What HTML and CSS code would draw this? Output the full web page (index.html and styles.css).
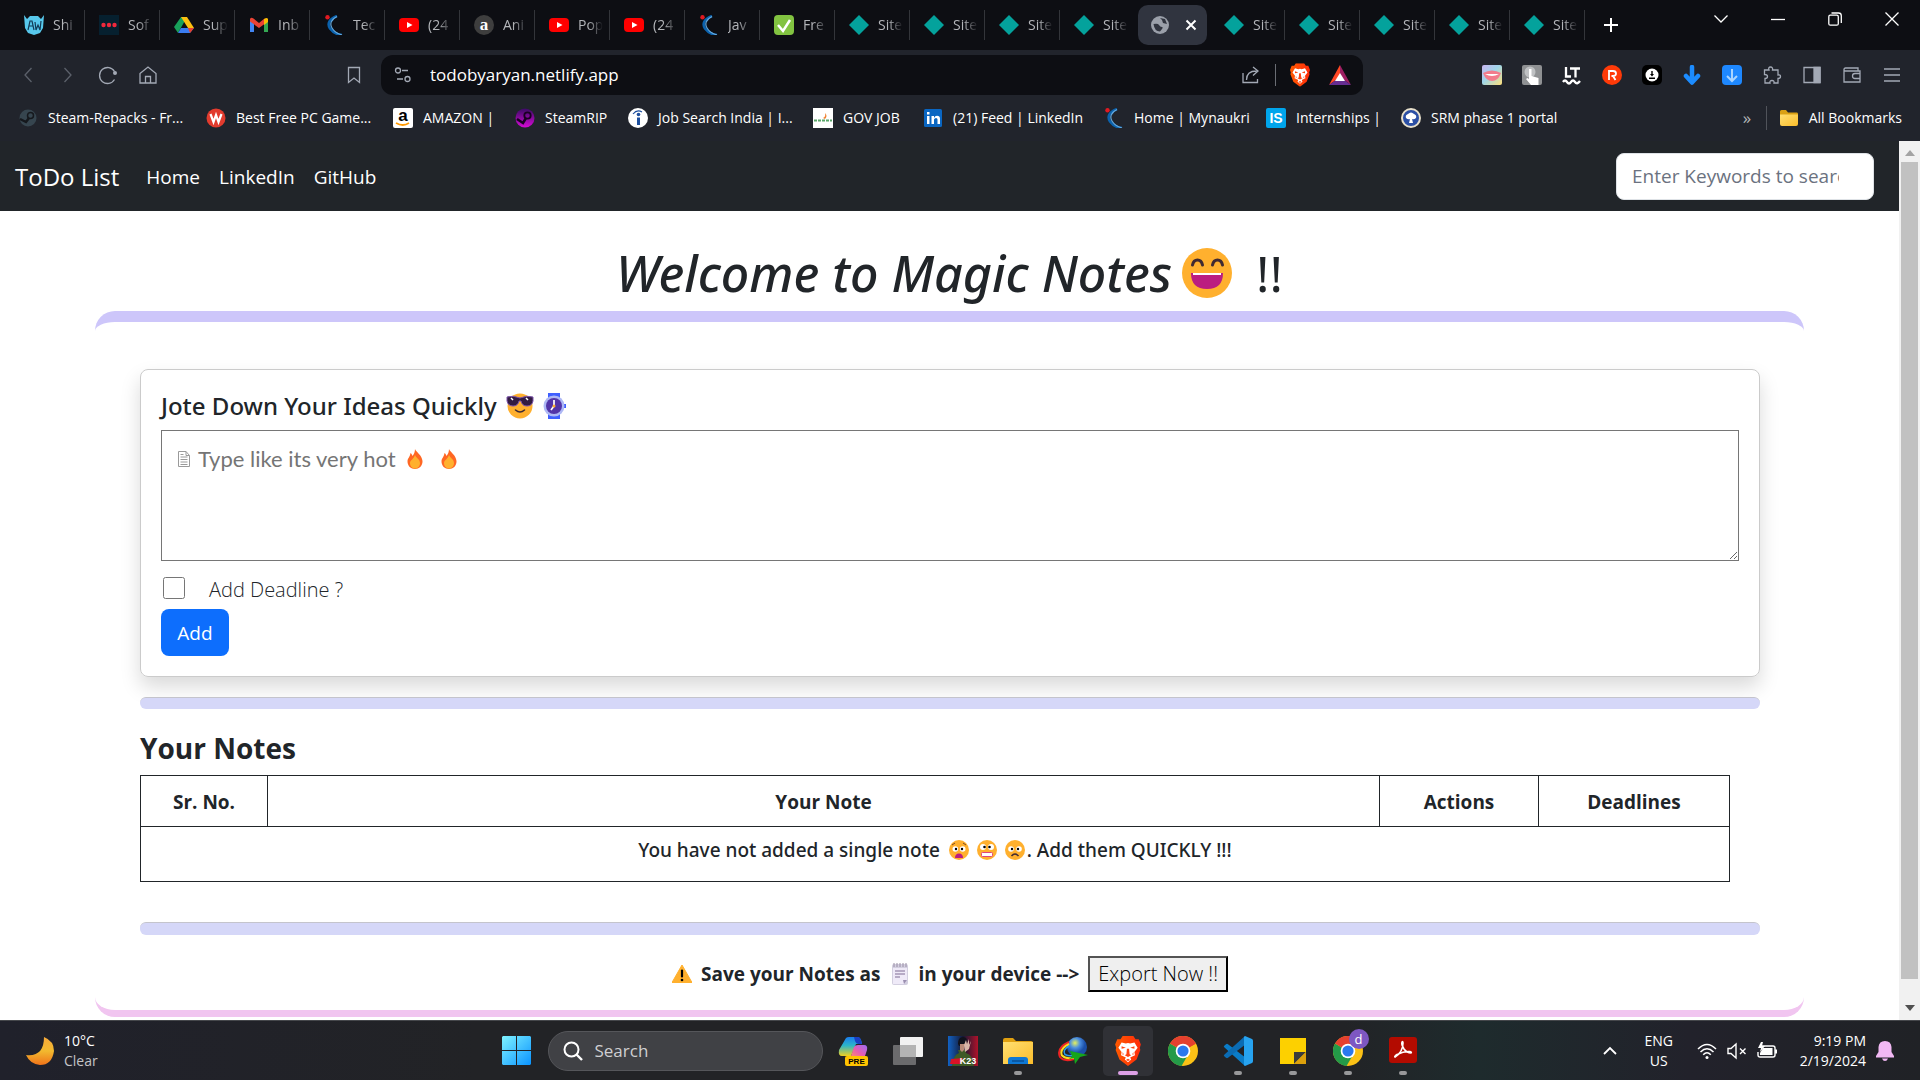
FILE: index.html
```html
<!DOCTYPE html>
<html lang="en">
<head>
<meta charset="utf-8">
<title>ToDo List</title>
<link rel="stylesheet" href="styles.css">
</head>
<body>
<svg class="sprite" aria-hidden="true">
  <defs>
    <linearGradient id="g-win" x1="0" y1="0" x2="1" y2="1"><stop offset="0" stop-color="#7ff3ff"/><stop offset="1" stop-color="#0a93ff"/></linearGradient>
    <linearGradient id="g-moon" x1="0" y1="0" x2="0" y2="1"><stop offset="0" stop-color="#f6a93a"/><stop offset=".5" stop-color="#f2b92f"/><stop offset="1" stop-color="#f0731a"/></linearGradient>
    <linearGradient id="g-brave" x1="0" y1="0" x2="1" y2="0"><stop offset="0" stop-color="#ff5a00"/><stop offset="1" stop-color="#ff2a0a"/></linearGradient>
    <linearGradient id="g-folder" x1="0" y1="0" x2="1" y2="1"><stop offset="0" stop-color="#ffdf72"/><stop offset="1" stop-color="#fbbd2b"/></linearGradient>
    <linearGradient id="g-cop" x1="0" y1="0" x2="0" y2="1"><stop offset="0" stop-color="#1a7df0"/><stop offset=".45" stop-color="#2cb5c8"/><stop offset="1" stop-color="#f0d020"/></linearGradient>
    <linearGradient id="g-cop2" x1="1" y1="0" x2="0" y2="1"><stop offset="0" stop-color="#9a6cf5"/><stop offset=".5" stop-color="#e85cb0"/><stop offset="1" stop-color="#ff9a5a"/></linearGradient>
    <linearGradient id="g-game" x1="0" y1="0" x2="1" y2="0"><stop offset="0" stop-color="#1262c4"/><stop offset=".5" stop-color="#151834"/><stop offset="1" stop-color="#b0122a"/></linearGradient>
    <linearGradient id="g-smile" x1="0" y1="0" x2="1" y2="1"><stop offset="0" stop-color="#c9b4f0"/><stop offset=".45" stop-color="#9fd6ea"/><stop offset="1" stop-color="#ffe07a"/></linearGradient>
    <linearGradient id="g-steam" x1="0" y1="0" x2="0" y2="1"><stop offset="0" stop-color="#3b0a66"/><stop offset="1" stop-color="#d40ad4"/></linearGradient>
    <radialGradient id="g-globe" cx=".4" cy=".3"><stop offset="0" stop-color="#e6f25c"/><stop offset=".5" stop-color="#4c8fe0"/><stop offset="1" stop-color="#1b4fa8"/></radialGradient>
    <symbol id="i-diamond" viewBox="0 0 20 20"><path d="M10 0l10 10-10 10L0 10z" fill="#04a29c"/></symbol>
    <symbol id="i-yt" viewBox="0 0 20 20"><rect y="3" width="20" height="14" rx="4" fill="#f00"/><path d="M8 7l5.500 3L8 13z" fill="#fff"/></symbol>
    <symbol id="i-naukri" viewBox="0 0 20 20"><circle cx="3.500" cy="2.200" r="2.200" fill="#e01a22"/><path d="M13 1C5 4 3 9 6 13.500c3 4 6 6 12 6.500" fill="none" stroke="#0b62ad" stroke-width="2.600"/><path d="M13 1.500C7 4.500 5.500 9 8 13c2 3.500 5 5.500 10 7" fill="none" stroke="#63a8de" stroke-width="1.200"/></symbol>
    <symbol id="i-brave" viewBox="0 0 24 28"><path d="M7 0h10l2 3 3 0 2 5-1 3 .5 2-3.500 9-8 6-8-6L.5 13 1 11 0 8l2-5h3z" fill="url(#g-brave)"/><path d="M6 6l4 1 2-.5L14 7l4-1 3 5-3 4 .5 3-4.500 2 1 2-3 2.500L9 22l1-2-4.500-2L6 15l-3-4z" fill="#fff"/><path d="M6 9.500l4 1.500-4 1zM18 9.500l-4 1.500 4 1zM11 12h2l.5 5 1.500 1-3 1.500L9 18l1.500-1zM7 15l1 2-1 1zM17 15l-1 2 1 1zM10 22.300l2-1 2 1-2 1z" fill="#ff4310"/></symbol>
    <symbol id="i-chrome" viewBox="0 0 30 30"><circle cx="15" cy="15" r="15" fill="#fbc116"/><path d="M15 15L2 7.500A15 15 0 0 0 13.500 30l7-12z" fill="#249a48"/><path d="M15 15L2 7.500A15 15 0 0 1 28 7.500z" fill="#e5402f"/><path d="M28 7.500H15v7z" fill="#e5402f"/><circle cx="15" cy="15" r="7.300" fill="#fff"/><circle cx="15" cy="15" r="5.600" fill="#2b78ee"/></symbol>
    <symbol id="i-folder" viewBox="0 0 20 20"><path d="M1 3.500Q1 2 2.500 2H7l2 2.500h9Q19 4.500 19 6v3H1z" fill="#d9a014"/><path d="M1 6.500h18V16q0 2-2 2H3q-2 0-2-2z" fill="url(#g-folder)"/></symbol>
    <symbol id="e-face" viewBox="0 0 20 20"><circle cx="10" cy="10" r="10" fill="#ffb02e"/></symbol>
    <symbol id="e-fire" viewBox="0 0 16 20"><path d="M8 0c1 3 7 6 7.500 12 .2 5-3.500 8-7.500 8S.3 17 .5 12C.7 9 3 8 3.500 4c1 .7 1.500 1.500 2 3C7 5 8 3 8 0z" fill="#ff6723"/><path d="M8 6c1 3 5 4 5 8 0 3-2 5.500-5 5.500S3 17 3 14c0-3 4-4 5-8z" fill="#ffb02e"/></symbol>
  </defs>
</svg>

<header class="chrome">
  <div class="tabstrip">
    <nav class="tabs" aria-label="Open tabs">
      <a class="tab" href="#"><svg class="ic" viewBox="0 0 20 20"><path d="M0 0l3 4 3-3h8l3 3 3-4-1 13-3 5-6 2-6-2-3-5z" fill="#57c8ec"/><path d="M4 15l2-9h2l2 9M5.500 11h3M11 7l1 8 2-5 2 5 1-9" fill="none" stroke="#123a55" stroke-width="1.200"/></svg><span>Shi</span></a>
      <a class="tab" href="#"><svg class="ic" viewBox="0 0 20 20"><path d="M0 0h20v20H0z" fill="#06202f"/><g fill="#f0283c"><circle cx="4.500" cy="10" r="2.200"/><circle cx="10" cy="10" r="2.200"/><circle cx="15.500" cy="10" r="2.200"/></g></svg><span>Sof</span></a>
      <a class="tab" href="#"><svg class="ic" viewBox="0 0 20 20"><path d="M7 2h6l-9 16L0 12z" fill="#18a05a"/><path d="M7 2h6l7 11h-6z" fill="#fcc010"/><path d="M4 18l3-5h13l-4 5z" fill="#3a7cf0"/><path d="M14 13h6l-4 5z" fill="#e8402f"/></svg><span>Sup</span></a>
      <a class="tab" href="#"><svg class="ic" viewBox="0 0 20 20"><path d="M1 5v12h4V8z" fill="#4285f4"/><path d="M19 5v12h-4V8z" fill="#34a853"/><path d="M1 4q1-2 3.500-.5L10 8l5.500-4.500V9L10 13 1 6.500z" fill="#ea4335"/><path d="M15 4q3-2 4 0v3l-4 3z" fill="#fbbc04"/></svg><span>Inb</span></a>
      <a class="tab" href="#"><svg class="ic"><use href="#i-naukri"/></svg><span>Tec</span></a>
      <a class="tab" href="#"><svg class="ic"><use href="#i-yt"/></svg><span>(24</span></a>
      <a class="tab" href="#"><svg class="ic" viewBox="0 0 20 20"><circle cx="10" cy="10" r="10" fill="#3e3e3e"/><text class="serif" x="10" y="15" text-anchor="middle" font-size="17" font-weight="700" fill="#fff">a</text></svg><span>Ani</span></a>
      <a class="tab" href="#"><svg class="ic"><use href="#i-yt"/></svg><span>Pop</span></a>
      <a class="tab" href="#"><svg class="ic"><use href="#i-yt"/></svg><span>(24</span></a>
      <a class="tab" href="#"><svg class="ic"><use href="#i-naukri"/></svg><span>Jav</span></a>
      <a class="tab" href="#"><svg class="ic" viewBox="0 0 20 20"><rect width="20" height="20" rx="4" fill="#82c341"/><path d="M4 10l5 6 7-11" fill="none" stroke="#fff" stroke-width="2.500"/></svg><span>Fre</span></a>
      <a class="tab" href="#"><svg class="ic"><use href="#i-diamond"/></svg><span>Site</span></a>
      <a class="tab" href="#"><svg class="ic"><use href="#i-diamond"/></svg><span>Site</span></a>
      <a class="tab" href="#"><svg class="ic"><use href="#i-diamond"/></svg><span>Site</span></a>
      <a class="tab plain" href="#"><svg class="ic"><use href="#i-diamond"/></svg><span>Site</span></a>
      <div class="tab current"><svg class="ic" viewBox="0 0 20 20"><circle cx="10" cy="10" r="9" fill="#9ba0aa"/><path d="M3.500 9q4.500-1 5.500 1t3 2-2 4.500q-5.500 0-6.500-7.500zM10 3l5 1 2 5-4-1-1-3z" fill="#30343f"/></svg><button class="close" aria-label="Close tab"><svg viewBox="0 0 12 12" width="12" height="12"><path d="M1.500 1.500l9 9m0-9l-9 9" stroke="#fff" stroke-width="2"/></svg></button></div>
      <a class="tab" href="#"><svg class="ic"><use href="#i-diamond"/></svg><span>Site</span></a>
      <a class="tab" href="#"><svg class="ic"><use href="#i-diamond"/></svg><span>Site</span></a>
      <a class="tab" href="#"><svg class="ic"><use href="#i-diamond"/></svg><span>Site</span></a>
      <a class="tab" href="#"><svg class="ic"><use href="#i-diamond"/></svg><span>Site</span></a>
      <a class="tab" href="#"><svg class="ic"><use href="#i-diamond"/></svg><span>Site</span></a>
    </nav>
    <button class="newtab" aria-label="New tab"><svg class="line" viewBox="0 0 14 14" width="14" height="14"><path d="M7 0v14M0 7h14" stroke-width="2"/></svg></button>
    <div class="winctl">
      <button aria-label="Search tabs"><svg class="line" viewBox="0 0 14 14" width="14" height="14"><path d="M.5 3.500L7 10l6.500-6.500"/></svg></button>
      <button aria-label="Minimize"><svg class="line" viewBox="0 0 14 14" width="14" height="14"><path d="M0 7.500h14"/></svg></button>
      <button aria-label="Restore"><svg class="line" viewBox="0 0 14 14" width="14" height="14"><rect x=".8" y="3.200" width="9.500" height="10" rx="1.500"/><path d="M3.500 1h7q2.800 0 2.800 2.800V11"/></svg></button>
      <button aria-label="Close"><svg class="line" viewBox="0 0 14 14" width="14" height="14"><path d="M.5.5l13 13m0-13l-13 13"/></svg></button>
    </div>
  </div>

  <div class="toolbar">
    <div class="navbtns">
      <button aria-label="Back"><svg class="line dim" viewBox="0 0 20 20"><path d="M13.500 3L7 10l6.500 7"/></svg></button>
      <button aria-label="Forward"><svg class="line dim" viewBox="0 0 20 20"><path d="M6.500 3l6.500 7-6.500 7"/></svg></button>
      <button aria-label="Reload"><svg class="line soft" viewBox="0 0 20 20"><path d="M16.500 14.500A8 8 0 1 1 16.500 6.500"/><circle cx="17" cy="8" r="2" fill="#a3a9b5" stroke="none"/></svg></button>
      <button aria-label="Home"><svg class="line soft" viewBox="0 0 20 20"><path d="M2 8.500L10 2l8 6.500V18H2zM7.500 18v-6.500h5V18"/></svg></button>
    </div>
    <button class="mark" aria-label="Bookmark"><svg class="line soft" viewBox="0 0 20 20"><path d="M4.500 2.500h11v15L10 13l-5.500 4.500z"/></svg></button>
    <div class="omni">
      <svg class="ic line" viewBox="0 0 20 20"><circle cx="5" cy="5.500" r="2.500"/><path d="M9 5.500h6M4 14h6"/><circle cx="14.500" cy="14" r="2.500"/></svg>
      <input class="url" type="text" aria-label="Address" value="todobyaryan.netlify.app">
      <button aria-label="Share"><svg class="line soft" viewBox="0 0 20 20"><path d="M2 8v9.500h14.500V14M5.500 15q0-9 10-9M12 2l5 4-5 4.500"/></svg></button>
      <i class="vbar"></i>
      <button aria-label="Shields"><svg viewBox="0 0 24 28"><use href="#i-brave"/></svg></button>
      <button class="bat" aria-label="Rewards"><svg viewBox="0 0 22 20"><path d="M11 0L0 20l11-8z" fill="#ff4724"/><path d="M11 0l11 20-11-8z" fill="#9e1f63"/><path d="M0 20l11-8 11 8z" fill="#662d91"/><path d="M11 8l5 8H6z" fill="#fff"/></svg></button>
    </div>
    <div class="exts">
      <button aria-label="Smile"><svg viewBox="0 0 20 20"><rect width="20" height="20" rx="2" fill="url(#g-smile)"/><path d="M1 8q9-5 18 0-3 8-9 8T1 8z" fill="#f27c8c"/><path d="M3 9h14q-7 4-14 0z" fill="#fff"/></svg></button>
      <button aria-label="Touch"><svg viewBox="0 0 20 20"><rect width="20" height="20" rx="2" fill="#8f9193"/><circle cx="8" cy="7" r="5.500" fill="#bfc1c3"/><path d="M7 4h2.500v7l7 2V20H9l-5-6 1.500-1L7 14z" fill="#fff"/></svg></button>
      <button aria-label="LanguageTool"><svg class="line" viewBox="0 0 20 20"><path d="M4 2v9.500h5M8 3.500h10M13.500 3.500v9M1 17q2-3 4 0t4 0 4 0 5-1" stroke-width="2.300"/></svg></button>
      <button aria-label="Recorder"><svg class="line" viewBox="0 0 20 20"><circle cx="10" cy="10" r="10" fill="#ff3a08" stroke="none"/><path d="M7 15V6h4q3 0 3 2.500T11 11H9.500M11 11l2.500 4" stroke-width="1.800"/></svg></button>
      <button aria-label="Downloader"><svg viewBox="0 0 20 20"><rect width="20" height="20" rx="5" fill="#000"/><circle cx="10" cy="10" r="6.500" fill="#fff"/><path d="M9.300 6h1.400v3H12l-2 2.500L8 9h1.300zM7 12.500h6V14H7z"/></svg></button>
      <button aria-label="Download"><svg viewBox="0 0 20 20"><path d="M10 2v14M4 11l6 6.500 6-6.500" fill="none" stroke="#1c8cff" stroke-width="4.500" stroke-linecap="round" stroke-linejoin="round"/></svg></button>
      <button aria-label="Download manager"><svg viewBox="0 0 20 20"><rect width="20" height="20" rx="4" fill="#1e88ff"/><path d="M10 4v12M5 11l5 5 5-5" fill="none" stroke="#a9d4ff" stroke-width="2"/></svg></button>
      <button aria-label="Extensions"><svg class="line soft" viewBox="0 0 20 20"><path d="M2.500 5H7q-1-3 1.500-3T10.500 5H16v5q2.500-.5 2.500 1.500T16 13.500V18h-4q.5-2.500-2-2.500T8 18H3v-4.500q2.500 0 2.500-2T2.500 9.500z"/></svg></button>
      <button aria-label="Sidebar"><svg class="line soft" viewBox="0 0 20 20"><path d="M2 2.500h16v15H2z"/><path d="M12 2.500h6v15h-6z" fill="#a3a9b5"/></svg></button>
      <button aria-label="Wallet"><svg class="line soft" viewBox="0 0 20 20"><path d="M18 8V6H3.500Q2 6 2 4.500T3.500 3H16v3M2 4.500V17h16v-3M18 8.500h-5q-2.500 0-2.500 2.500t2.500 2.500h5z"/></svg></button>
      <button aria-label="Menu"><svg class="line soft" viewBox="0 0 20 20"><path d="M2 4h16M2 10h16M2 16h16"/></svg></button>
    </div>
  </div>

  <nav class="bookmarks" aria-label="Bookmarks">
    <a href="#"><svg class="ic" viewBox="0 0 20 20"><circle cx="10" cy="10" r="8.500" fill="#36454f"/><circle cx="12.500" cy="7.500" r="3" fill="none" stroke="#15181d" stroke-width="1.500"/><path d="M2 11l6 3 3-4" stroke="#15181d" stroke-width="2.500" fill="none"/></svg>Steam-Repacks - Fr...</a>
    <a href="#"><svg class="ic" viewBox="0 0 20 20"><circle cx="10" cy="10" r="9.500" fill="#e23b2e"/><path d="M4.500 6l3 8L10 7l2.500 7 3-8" fill="none" stroke="#fff" stroke-width="2.200"/></svg>Best Free PC Game...</a>
    <a href="#"><svg class="ic" viewBox="0 0 20 20"><rect width="20" height="20" rx="2" fill="#fff"/><text class="sans" x="10" y="13" text-anchor="middle" font-size="17" font-weight="700">a</text><path d="M3 15q7 4 13 0" fill="none" stroke="#f90" stroke-width="1.800"/></svg>AMAZON |</a>
    <a href="#"><svg class="ic" viewBox="0 0 20 20"><circle cx="10" cy="10" r="9.500" fill="url(#g-steam)"/><circle cx="12.500" cy="7.500" r="3.200" fill="none" stroke="#190022" stroke-width="1.800"/><path d="M2 11l6 4 3-5" stroke="#190022" stroke-width="2.500" fill="none"/></svg>SteamRIP</a>
    <a href="#"><svg class="ic" viewBox="0 0 20 20"><circle cx="10" cy="10" r="10" fill="#fff"/><path d="M5 6q4-5 9-2" fill="none" stroke="#1d4f9e" stroke-width="1.200"/><circle cx="10.500" cy="6.500" r="1.800" fill="#1d4f9e"/><path d="M9 9.500h3V17H9z" fill="#1d4f9e"/></svg>Job Search India | I...</a>
    <a href="#"><svg class="ic" viewBox="0 0 20 20"><path d="M0 0h20v20H0z" fill="#fff"/><path d="M1 12.500h18" stroke="#5aa76a" stroke-width="2" stroke-dasharray="3 1"/><path d="M12 5q3 3 0 6l-2-1q3-1 2-5z" fill="#f08030"/></svg>GOV JOB</a>
    <a href="#"><svg class="ic" viewBox="0 0 20 20"><rect x="1" y="1" width="18" height="18" rx="1.500" fill="#0a66c2"/><path d="M4 8h2.500v8H4zM4 4h2.500v2.500H4zM8.500 8H11v8H8.500zM11 10q1-2.300 3-2.300 3 0 3 3.300v5h-2.500v-4.500q0-1.500-1.500-1.500t-2 1.500z" fill="#fff"/></svg>(21) Feed | LinkedIn</a>
    <a href="#"><svg class="ic"><use href="#i-naukri"/></svg>Home | Mynaukri</a>
    <a href="#"><svg class="ic" viewBox="0 0 20 20"><rect width="20" height="20" rx="2" fill="#00a5ec"/><text class="sans" x="10" y="15" text-anchor="middle" font-size="14" font-weight="700" fill="#fff">IS</text></svg>Internships |</a>
    <a href="#"><svg class="ic" viewBox="0 0 20 20"><circle cx="10" cy="10" r="9" fill="#2b4fa5" stroke="#e8e0cc" stroke-width="2"/><path d="M5 10q-1-3 2-4 3-3 6 0 3 1 2 4-2 2-4 1l1 4H8l1-4q-2 1-4-1z" fill="#fff"/></svg>SRM phase 1 portal</a>
    <span class="more">»</span>
    <a class="allmarks" href="#"><svg class="ic"><use href="#i-folder"/></svg>All Bookmarks</a>
  </nav>
</header>

<div class="viewport">
  <div class="page">
    <nav class="navbar">
      <a class="brand" href="#">ToDo List</a>
      <a href="#">Home</a>
      <a href="#">LinkedIn</a>
      <a href="#">GitHub</a>
      <input class="search" type="text" aria-label="Search notes" placeholder="Enter Keywords to search">
    </nav>

    <h1><em>Welcome to Magic Notes</em><svg class="grin" viewBox="0 0 50 50"><circle cx="25" cy="25" r="25" fill="#ffb02e"/><path d="M10.500 17q1-5 5-5t5 5M30.500 17q1-5 5-5t5 5" fill="none" stroke="#402a32" stroke-width="3" stroke-linecap="round"/><path d="M9 25h32q0 16-16 16T9 25z" fill="#bb1d80"/><path d="M11 25h28v2H11z" fill="#fff"/></svg><span>!!</span></h1>

    <main class="frame">
      <section class="card">
        <h2><label for="note">Jote Down Your Ideas Quickly</label>
          <svg class="emo28" viewBox="0 0 28 26"><circle cx="14" cy="13" r="12.500" fill="#ffb02e"/><path d="M1 4q6-2 13 1 7-3 13-1v4q-1 5-6 5-5 0-6-5h-2q-1 5-6 5-5 0-6-5z" fill="#321b41" stroke="#7b52ab" stroke-width="1"/><path d="M5 5l2 2M20 5l2 2" stroke="#fff" stroke-width="1.500"/><path d="M9.500 17q4.500 4 9 0" fill="none" stroke="#402a32" stroke-width="1.600" stroke-linecap="round"/></svg>
          <svg class="emo24" viewBox="0 0 24 26"><path d="M5 0h12v26H5z" fill="#3f5fff"/><path d="M20 11h3v4h-3z" fill="#3f5fff"/><circle cx="11" cy="13" r="10.500" fill="#aeb8f5"/><circle cx="11" cy="13" r="8" fill="#5235a8"/><path d="M11 7v6l-3 4" fill="none" stroke="#fff" stroke-width="1.700"/><circle cx="11" cy="13" r="1.500" fill="#ffb02e"/></svg>
        </h2>
        <div class="notebox">
          <textarea id="note" placeholder="Type like its very hot"></textarea>
          <svg class="sheet" viewBox="0 0 12 16"><path d="M.5.5H8l3.500 4v11H.5zM8 .5v4h3.500M2.500 6h7M2.500 8.500h7M2.500 11h7M2.500 13.500h7M2.500 3.500h3" fill="none" stroke="#9a9a9a"/></svg>
          <div class="fires"><svg><use href="#e-fire"/></svg><svg><use href="#e-fire"/></svg></div>
        </div>
        <div class="deadline"><input type="checkbox" id="dl"><label for="dl">Add Deadline ?</label></div>
        <button class="add">Add</button>
      </section>
      <hr>
      <h3>Your Notes</h3>
      <table>
        <thead><tr><th class="c1">Sr. No.</th><th>Your Note</th><th class="c3">Actions</th><th class="c4">Deadlines</th></tr></thead>
        <tbody><tr><td colspan="4">You have not added a single note
          <span class="faces"><svg class="face" viewBox="0 0 20 20"><use href="#e-face"/><circle cx="6.300" cy="9" r="2.800" fill="#fff"/><circle cx="13.700" cy="9" r="2.800" fill="#fff"/><circle cx="7" cy="9" r="1.200"/><circle cx="13" cy="9" r="1.200"/><path d="M3 5l3-2M17 5l-3-2" stroke="#804a20"/><path d="M6 18q0-4.500 4-4.500t4 4.500z" fill="#bb1d80"/></svg><svg class="face" viewBox="0 0 20 20"><use href="#e-face"/><circle cx="6" cy="7" r="3" fill="#fff"/><circle cx="14" cy="7" r="3" fill="#fff"/><circle cx="7.500" cy="7" r="1.300"/><circle cx="12.500" cy="7" r="1.300"/><rect x="4.500" y="12.500" width="11" height="4" rx="1" fill="#fff" stroke="#e0457b"/></svg><svg class="face" viewBox="0 0 20 20"><use href="#e-face"/><circle cx="6" cy="9" r="2.800" fill="#fff"/><circle cx="14" cy="9" r="2.800" fill="#fff"/><circle cx="7" cy="9" r="1.200"/><circle cx="13" cy="9" r="1.200"/><path d="M6.500 16q3.500-4 7 0" fill="none" stroke="#402a32" stroke-width="1.500"/></svg></span>. Add them QUICKLY !!!</td></tr></tbody>
      </table>
      <hr class="second">
      <div class="export">
        <svg class="ic" viewBox="0 0 20 20"><path d="M10 1l10 17.500H0z" fill="#ffb02e" stroke="#ffb02e" stroke-linejoin="round"/><path d="M10 6.500v6" stroke="#000" stroke-width="2.200" stroke-linecap="round"/><circle cx="10" cy="16" r="1.300"/></svg>
        <strong>Save your Notes as</strong>
        <svg class="pad" viewBox="0 0 16 22"><rect y="1" width="16" height="21" rx="2" fill="#d3cfe0"/><path d="M1 5h14v12l-3 4H1z" fill="#efeaf8"/><path d="M2 0v4M5 0v4M8 0v4M11 0v4M14 0v4" stroke="#998ea4" stroke-width="1"/><path d="M3 8h10M3 11h10M3 14h5" stroke="#a596b5" stroke-width="1.300"/><path d="M11 17h4l-3 4z" fill="#9b8fb0"/></svg>
        <strong>in your device --&gt;</strong>
        <button>Export Now !!</button>
      </div>
    </main>
  </div>
  <div class="scroll" aria-hidden="true">
    <svg viewBox="0 0 10 6"><path d="M5 0l5 6H0z" fill="#a3a3a3"/></svg>
    <div class="thumb"></div>
    <svg viewBox="0 0 10 6"><path d="M5 6l5-6H0z" fill="#505050"/></svg>
  </div>
</div>

<footer class="taskbar">
  <div class="weather"><svg viewBox="0 0 28 28"><path d="M18 0q10 4 10 14Q26 28 14 28 4 27 0 18q18 2 18-18z" fill="url(#g-moon)"/></svg><div><b>10°C</b><span>Clear</span></div></div>
  <div class="dock">
    <button class="start" aria-label="Start"><svg viewBox="0 0 29 29"><path d="M1 0h13v14H0V1zM15 0h13l1 1v13H15zM0 15h14v14H1l-1-1zM15 15h14v13l-1 1H15z" fill="url(#g-win)"/></svg></button>
    <label class="find"><svg class="line" viewBox="0 0 20 20"><circle cx="8.500" cy="8.500" r="7" stroke-width="2"/><path d="M13.500 13.500l5.500 5.500" stroke-width="2.400"/></svg><input type="text" placeholder="Search" aria-label="Search"></label>
    <div class="apps">
      <button aria-label="Copilot"><svg viewBox="0 0 30 30"><path d="M8 2q1-1 3-1h8q3 0 4 3l1 4h-6L13 20H4q-4 0-3-6z" fill="url(#g-cop)"/><path d="M16 1h4q2 0 3 3l1 4h-4q-2 0-3-3z" fill="#1a3fc4"/><path d="M20 9h6q4 0 3 5l-3 9H12l4-12q1-2 4-2z" fill="url(#g-cop2)"/><rect x="7" y="20" width="23" height="10" rx="2" fill="#ffc400"/><text class="sans" x="18.500" y="28" font-size="8" font-weight="700" text-anchor="middle">PRE</text></svg></button>
      <button aria-label="Task view"><svg viewBox="0 0 30 30"><rect y="9" width="23" height="20" rx="1" fill="#6b6b6d"/><rect x="7" y="1" width="23" height="20" rx="1" fill="#f2f2f2"/><path d="M7 9h16v12H7z" fill="#b4b4b4"/></svg></button>
      <button aria-label="Game"><svg viewBox="0 0 30 30"><path d="M0 0h30v30H0z" fill="url(#g-game)"/><path d="M4 30q1-11 7-13l-1-3h7l1 3q7 2 8 13z" fill="#3e5a26"/><path d="M10 8q0-7 5-7t4 7l-1 2h-7z" fill="#10121c"/><path d="M12 8h5l-1 6-2 2-2-2z" fill="#b98a78"/><path d="M16 9l2-5 1 4 2-5 0 6 2-4-2 8-4 3z" fill="#d9b5a8"/><path d="M3 23l12-1-3 6H2z" fill="#d91226"/><text class="sans" x="20" y="28" font-size="9" font-weight="700" fill="#fff" text-anchor="middle">K23</text></svg></button>
      <button class="run" aria-label="File Explorer"><svg viewBox="0 0 30 30"><path d="M0 4q0-2 2-2h8l3 3h15q2 0 2 2v4H0z" fill="#e0a010"/><path d="M0 6h30v22H0z" fill="url(#g-folder)"/><path d="M5 28v-4q0-3 3-3h14q3 0 3 3v4z" fill="#0f78d4"/><path d="M9 25h12" stroke="#0a4f96" stroke-width="1.500"/></svg></button>
      <button aria-label="Download manager"><svg viewBox="0 0 30 30"><circle cx="19" cy="11" r="10" fill="url(#g-globe)"/><path d="M11 6Q-2 12 2 21q4 5 14 2" fill="none" stroke="#e22" stroke-width="2"/><path d="M11 8Q1 13 4 19.500q4 4 12 2" fill="none" stroke="#ffd91f" stroke-width="2"/><path d="M11 10q-7 4-4 8.500 4 2 9 1" fill="none" stroke="#2c9be8" stroke-width="1.500"/><path d="M12 15l18 4-8 2-5 7-1-6-5 1 3-3z" fill="#16a51c"/></svg></button>
      <button class="run active" aria-label="Brave"><svg viewBox="0 0 30 30"><use href="#i-brave"/></svg></button>
      <button aria-label="Chrome"><svg><use href="#i-chrome"/></svg></button>
      <button class="run" aria-label="Code"><svg viewBox="0 0 30 30"><path d="M22 30L1.500 11.500q-1.500-1 0-2L3 8.200q1-.7 2 0L23 22z" fill="#0a7cc8"/><path d="M22 0L1.500 18.500q-1.500 1 0 2L3 21.800q1 .7 2 0L23 8z" fill="#0b6cb4"/><path d="M22 0l7 3q1 .5 1 2v20q0 1.500-1 2l-7 3-1-1V1z" fill="#27a3f0"/></svg></button>
      <button class="run" aria-label="Sticky Notes"><svg viewBox="0 0 30 30"><path d="M2 2h26v26H2z" fill="#fdd000"/><path d="M16 16h12L16 28z" fill="#3b3b3b"/><path d="M28 16v12H16z" fill="#dca00c"/></svg></button>
      <button class="run" aria-label="Chrome profile"><svg><use href="#i-chrome"/></svg><span class="badge">d</span></button>
      <button class="run" aria-label="Acrobat"><svg viewBox="0 0 30 30"><rect x="1" y="1" width="28" height="26" rx="3" fill="#b30b00"/><path d="M7 21q8-5 8-14 0-2-1-1-1 2 2 7 3 4 7 4 1-1-1-1.500-6-.5-13 3-3 2-2 2.500z" fill="none" stroke="#fff" stroke-width="1.600"/></svg></button>
    </div>
  </div>
  <div class="tray">
    <button aria-label="Hidden icons"><svg class="line" viewBox="0 0 14 14" width="14" height="14"><path d="M1 10l6-6 6 6" stroke-width="1.800"/></svg></button>
    <div class="lang"><span>ENG</span><span>US</span></div>
    <div class="status">
      <svg class="line" viewBox="0 0 20 20"><path d="M1 8q9-9 18 0M3.500 11q6.500-6.500 13 0M6.200 13.700q3.800-3.800 7.600 0" stroke-width="1.500"/><circle cx="10" cy="16.500" r="1.500" fill="#fff" stroke="none"/></svg>
      <svg class="line" viewBox="0 0 20 20"><path d="M1 7.500h3L9 3v14l-5-4.500H1zM13 7.500l5.500 5.500m0-5.500L13 13" stroke-width="1.400"/></svg>
      <svg class="line" viewBox="0 0 20 20"><path d="M5 5h11q2 0 2 2v7q0 2-2 2H3q-2 0-2-2v-3M19.300 8.500v4" stroke-width="1.400"/><path d="M6 7h9.500v7H3v-2z" fill="#fff" stroke="none"/><path d="M4 1L1 7h3l-1 4 5-6H5l1-4z" fill="#fff" stroke="none"/></svg>
    </div>
    <div class="clock"><span>9:19 PM</span><span>2/19/2024</span></div>
    <svg class="bell" viewBox="0 0 18 20"><path d="M9 0q6 0 6.500 6v5L18 15v1.500H0V15l2.500-4V6Q3 0 9 0zM6 17.500h6q-1 2.500-3 2.500t-3-2.500z" fill="#f1b8f3"/></svg>
  </div>
</footer>
</body>
</html>
```
FILE: styles.css
```css
* { box-sizing: border-box; }
body {
  margin: 0;
  min-height: 100vh;
  display: flex;
  flex-direction: column;
  background: #fff;
  color: #212529;
  font-family: "Open Sans", "Noto Sans", sans-serif;
  font-size: 19px;
  line-height: 30px;
}
button, input, textarea { font: inherit; color: inherit; }
button { border: 0; padding: 0; background: none; }
a { color: inherit; text-decoration: none; }
svg { display: block; }
.sprite { position: absolute; width: 0; height: 0; }
.serif { font-family: "Liberation Serif", serif; }
.sans { font-family: "Liberation Sans", sans-serif; }
.ic { width: 20px; height: 20px; flex: none; }
.line { fill: none; stroke: #fff; stroke-width: 1.3; }
.line.soft { stroke: #a3a9b5; }
.line.dim { stroke: #5c616b; }

/* Browser frame */
.chrome { background: #21242c; color: #fff; font-size: 14px; line-height: 20px; }
.tabstrip { display: flex; height: 50px; background: #0d0e13; padding-left: 10px; }
.tabs { display: flex; align-items: center; }
.tab {
  width: 75px; height: 30px; padding-left: 14px; flex: none;
  display: flex; align-items: center; gap: 9px;
  border-right: 1px solid #33353a; color: #b4b6ba;
}
.tab span { white-space: nowrap; -webkit-mask-image: linear-gradient(90deg, #000 10px, transparent 25px); mask-image: linear-gradient(90deg, #000 10px, transparent 25px); }
.tab.plain { border-color: transparent; }
.tab.current { width: 69px; height: 40px; margin: 0 3px; padding-left: 12px; border: 0; border-radius: 10px; background: #30343f; gap: 15px; }
.newtab { width: 52px; display: grid; place-items: center; }
.winctl { margin-left: auto; height: 38px; display: flex; }
.winctl button { width: 57px; display: grid; place-items: center; }

.toolbar { display: flex; align-items: center; height: 50px; padding: 0 8px; }
.toolbar button { width: 40px; height: 40px; display: grid; place-items: center; flex: none; }
.toolbar button svg { width: 20px; height: 20px; }
.navbtns { display: flex; }
.mark { margin-left: 166px; }
.omni { flex: 1; display: flex; align-items: center; height: 40px; margin: 0 109px 0 7px; padding: 0 3px 0 12px; border-radius: 12px; background: #0d0e13; }
.omni .line { stroke: #a3a9b5; }
.url { flex: 1; min-width: 0; margin-left: 17px; padding: 0; border: 0; background: none; color: #fff; font-size: 17px; }
.toolbar .omni button svg { height: 24px; }
.toolbar .omni .bat svg { width: 22px; }
.vbar { width: 1px; height: 22px; margin: 0 4px; background: #6a6d74; }
.exts { display: flex; }

.bookmarks {
  display: grid; align-items: center; height: 41px; padding: 0 18px 5px;
  grid-template-columns: 188px 187px 122px 113px 185px 110px 181px 162px 135px 1fr 23px auto;
}
.bookmarks a { display: flex; align-items: center; gap: 10px; white-space: nowrap; }
.more { color: #b4b6ba; font-size: 17px; }
.bookmarks .allmarks { border-left: 1px solid #50535a; padding-left: 12px; height: 24px; }

/* Web page */
.viewport { flex: 1; display: flex; }
.page { flex: 1; min-width: 0; }
.navbar { display: flex; align-items: center; gap: 19px; height: 70px; padding: 0 25px 0 15px; background: #212529; color: #fff; }
.navbar a { padding-top: 2px; }
.brand { font-size: 24px; margin-right: 8px; }
.search { width: 258px; height: 47px; margin-left: auto; padding: 0 34px 0 15px; border: 1px solid #dee2e6; border-radius: 8px; background: #fff; }
.search::placeholder { color: #6b7280; opacity: 1; }

h1, h2, h3 { margin: 0; }
h1, h2, td { font-family: "Noto Sans", "Open Sans", sans-serif; }
h1 { display: flex; justify-content: center; align-items: center; height: 60px; margin-top: 32px; font-size: 50px; line-height: 60px; font-weight: 500; }
h1 span { margin-left: 24px; font-weight: 400; }
.grin { width: 50px; height: 50px; margin-left: 10px; }
.frame { margin: 8px 95px 3px; padding: 47px 44px 18px 45px; border: 0 solid; border-top: 11px solid #cdc6fa; border-bottom: 7px solid #f1c5f0; border-radius: 20px; }
.card { height: 308px; padding: 20px; border: 1px solid #cbcbcb; border-radius: 8px; box-shadow: 0 10px 20px rgba(0,0,0,.15); }
h2 { display: flex; align-items: center; gap: 9px; height: 32px; margin-bottom: 8px; font-size: 24px; font-weight: 500; }
.emo28 { width: 28px; height: 26px; }
.emo24 { width: 24px; height: 26px; }
.notebox { position: relative; }
textarea { display: block; width: 100%; height: 131px; padding: 13px 36px; border: 1px solid #767676; background: #fff; font-family: Lato, sans-serif; font-size: 22px; }
textarea::placeholder { color: #757575; }
.sheet { position: absolute; left: 17px; top: 21px; width: 12px; height: 16px; }
.fires { position: absolute; left: 246px; top: 19px; display: flex; gap: 18px; }
.fires svg { width: 16px; height: 20px; }
.deadline { display: flex; align-items: center; gap: 24px; height: 48px; padding-top: 9px; font-size: 20px; font-weight: 300; }
.deadline input { width: 22px; height: 22px; margin: 0 0 4px 2px; }
.add { width: 68px; height: 47px; border-radius: 8px; background: #0d6efd; color: #fff; }
hr { height: 12px; margin: 20px 0; border: 0; border-top: 1px solid #c4c4cc; border-radius: 6px; background: #d5d7f8; }
h3 { margin-bottom: 8px; font-size: 28px; line-height: 38px; font-weight: 700; }
table { width: calc(100% - 30px); table-layout: fixed; border-collapse: collapse; text-align: center; }
th, td { border: 1px solid #212529; padding: 0; font-weight: 500; }
th { height: 51px; padding-top: 2px; font-weight: 700; }
td { height: 55px; padding-bottom: 8px; }
.c1 { width: 127px; }
.c3 { width: 159px; }
.c4 { width: 191px; }
.faces { display: inline-flex; gap: 8px; margin: 0 2px 0 4px; vertical-align: -3px; }
.face { width: 20px; height: 20px; }
hr.second { height: 13px; margin: 40px 0 20px; }
.export { display: flex; justify-content: center; align-items: center; gap: 9px; padding-top: 1px; }
.pad { width: 16px; height: 22px; margin: 0 2px; }
.export button { height: 36px; padding: 0 8px; border: 2px outset #000; background: #efefef; color: #000; font-size: 20px; font-weight: 300; }

.scroll { width: 21px; flex: none; display: flex; flex-direction: column; align-items: center; gap: 6px; padding: 9px 0; background: #f1f1f1; }
.scroll svg { width: 10px; height: 6px; }
.thumb { flex: 1; width: 17px; margin-bottom: 20px; background: #c1c1c1; }

/* Taskbar */
.taskbar { display: grid; grid-template-columns: 1fr auto 1fr; align-items: center; height: 60px; border-top: 1px solid #45474b; background: linear-gradient(90deg, #20212b, #222326 25%, #222326 70%, #1e2b2d 77%, #22222b 88%, #202226); color: #fff; font-size: 14px; line-height: 20px; }
.weather { display: flex; gap: 10px; padding-left: 26px; align-items: center; }
.weather svg { width: 28px; height: 28px; }
.weather b, .weather span { display: block; font-weight: 400; }
.weather span { color: #c4c4c6; }
.dock { display: flex; align-items: center; padding-left: 9px; }
.start svg { width: 29px; height: 29px; }
.find { display: flex; align-items: center; gap: 12px; width: 275px; height: 40px; margin: 0 5px 0 17px; padding: 0 14px; border: 1px solid #55565a; border-radius: 20px; background: #404145; }
.find svg { width: 20px; height: 20px; }
.find input { width: 180px; padding: 0; border: 0; background: none; font-size: 17px; }
.find input::placeholder { color: #cfcfd1; }
.apps { display: flex; gap: 5px; }
.apps button { position: relative; width: 50px; height: 50px; display: grid; place-items: center; border-radius: 5px; }
.apps svg { width: 30px; height: 30px; }
.apps .active { background: #303136; }
.run::after { content: ""; position: absolute; left: 21px; bottom: 1px; width: 8px; height: 4px; border-radius: 2px; background: #98989a; }
.run.active::after { left: 15px; width: 20px; background: #dda0e6; }
.badge { position: absolute; right: 4px; top: 3px; width: 20px; height: 20px; border-radius: 50%; background: #7e57c2; color: #fff; font-size: 13px; }
.tray { display: flex; align-items: center; justify-content: flex-end; padding-right: 26px; }
.lang { display: grid; justify-items: center; margin: 0 24px 0 28px; }
.status { display: flex; gap: 10px; }
.status svg { width: 20px; height: 20px; }
.clock { display: grid; justify-items: end; width: 89px; }
.bell { width: 18px; height: 20px; margin-left: 10px; }
```
